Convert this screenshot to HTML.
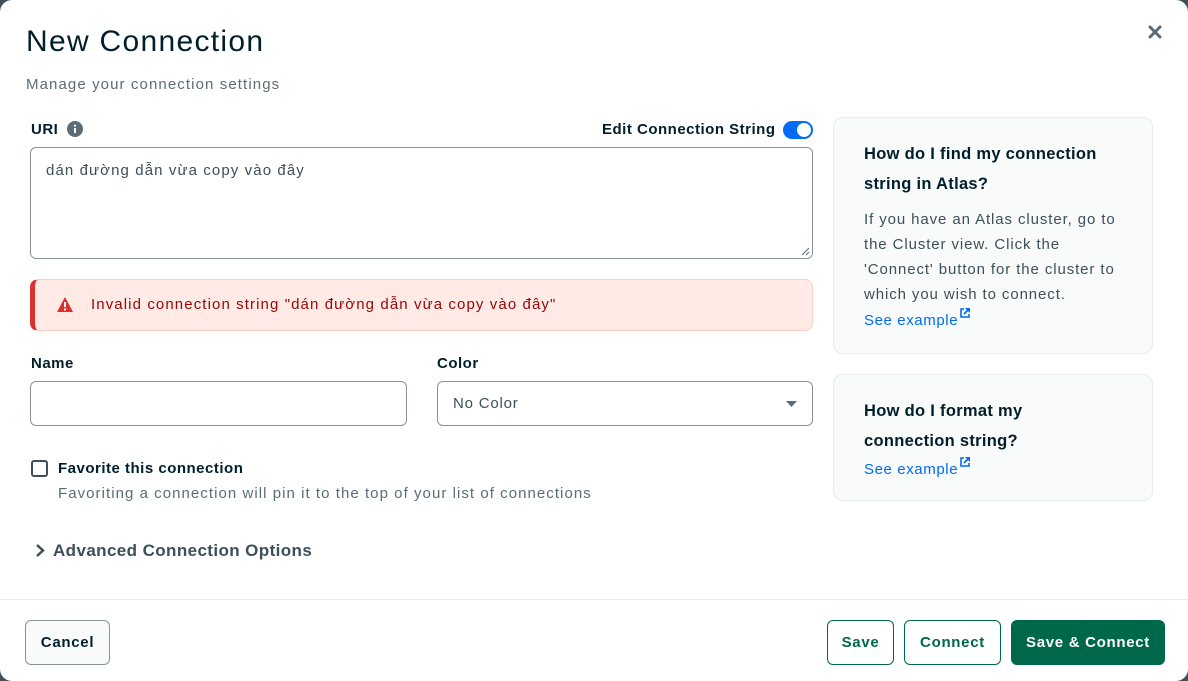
<!DOCTYPE html>
<html><head><meta charset="utf-8"><style>
*{box-sizing:border-box;margin:0;padding:0}
html,body{width:1188px;height:681px;background:#3d4f58;overflow:hidden}
body{font-family:"Liberation Sans",sans-serif;color:#001e2b}
.dlg{position:absolute;left:0;top:0;width:1188px;height:681px;background:#fff;border-radius:12px}
.abs{position:absolute;white-space:nowrap}
h1{position:absolute;left:26px;top:25px;font-size:30px;font-weight:normal;letter-spacing:1.3px}
.sub{left:26px;top:76px;font-size:15px;color:#5c6c75;letter-spacing:1.1px}
.lbl{font-size:15px;font-weight:bold;color:#001e2b;letter-spacing:0.5px}
.ta{left:30px;top:147px;width:783px;height:112px;border:1px solid #889397;border-radius:6px;padding:14px 15px;font-size:15px;color:#3d4f58;letter-spacing:1.1px}
.err{left:30px;top:279px;width:783px;height:52px;background:#ffeae5;border:1px solid #ffcdc7;border-left:5px solid #db3030;border-radius:8px}
.err span{position:absolute;left:56px;top:16px;font-size:15px;color:#970606;letter-spacing:1.1px}
.inp{border:1px solid #889397;border-radius:6px;height:45px}
.card{position:absolute;left:833px;width:320px;background:#f9fbfa;border:1px solid #e8edeb;border-radius:10px;padding:21px 30px;white-space:nowrap}
.card h3{font-size:16.5px;line-height:30px;font-weight:bold;color:#001e2b;letter-spacing:0.3px}
.card p{font-size:15px;line-height:25px;color:#3d4f58;margin-top:8px;letter-spacing:0.9px}
.link{font-size:15px;color:#016bf8;line-height:25px;letter-spacing:0.6px}
.btn{position:absolute;top:620px;height:45px;border-radius:6px;font-size:15px;font-weight:bold;display:flex;align-items:center;justify-content:center;letter-spacing:0.7px}
</style></head><body>
<div class="dlg">
<h1>New Connection</h1>
<div class="abs sub">Manage your connection settings</div>
<svg class="abs" style="left:1148px;top:25px" width="14" height="14" viewBox="0 0 14 14"><path d="M2 2L12 12M12 2L2 12" stroke="#5c6c75" stroke-width="3" stroke-linecap="round"/></svg>

<div class="abs lbl" style="left:31px;top:121px">URI</div>
<svg class="abs" style="left:67px;top:121px" width="16" height="16" viewBox="0 0 16 16"><circle cx="8" cy="8" r="8" fill="#5c6c75"/><rect x="7" y="7" width="2" height="5" fill="#fff"/><circle cx="8" cy="4.6" r="1.1" fill="#fff"/></svg>
<div class="abs lbl" style="left:602px;top:121px">Edit Connection String</div>
<div class="abs" style="left:783px;top:121px;width:30px;height:18px;border-radius:9px;background:#016bf8"><div style="position:absolute;right:2px;top:2px;width:14px;height:14px;border-radius:50%;background:#fff"></div></div>

<div class="abs ta">dán đường dẫn vừa copy vào đây</div>
<svg class="abs" style="left:800px;top:246px" width="10" height="10"><path d="M9 2L2 9M9 6L6 9" stroke="#5c6c75" stroke-width="1"/></svg>

<div class="abs err">
<svg class="abs" style="left:21px;top:16px" width="18" height="17" viewBox="0 0 18 17"><path d="M9 1L17 16H1Z" fill="#db3030"/><rect x="8" y="6" width="2" height="5" fill="#fff"/><rect x="8" y="12.5" width="2" height="2" fill="#fff"/></svg>
<span>Invalid connection string "dán đường dẫn vừa copy vào đây"</span>
</div>

<div class="abs lbl" style="left:31px;top:355px">Name</div>
<div class="abs inp" style="left:30px;top:381px;width:377px"></div>
<div class="abs lbl" style="left:437px;top:355px">Color</div>
<div class="abs inp" style="left:437px;top:381px;width:376px"><span style="position:absolute;left:15px;top:13px;font-size:15px;color:#3d4f58;letter-spacing:0.8px">No Color</span>
<svg class="abs" style="left:348px;top:19px" width="11" height="7"><path d="M0 0H11L5.5 6Z" fill="#5c6c75"/></svg></div>

<div class="abs" style="left:31px;top:460px;width:17px;height:17px;border:2px solid #3d4f58;border-radius:3px"></div>
<div class="abs lbl" style="left:58px;top:460px">Favorite this connection</div>
<div class="abs" style="left:58px;top:485px;font-size:15px;color:#5c6c75;letter-spacing:1.05px">Favoriting a connection will pin it to the top of your list of connections</div>

<svg class="abs" style="left:35px;top:543px" width="10" height="15"><path d="M2 2L8 7.5L2 13" stroke="#3d4f58" stroke-width="2.5" fill="none"/></svg>
<div class="abs" style="left:53px;top:541px;font-size:17px;font-weight:bold;color:#3d4f58;letter-spacing:0.4px">Advanced Connection Options</div>

<div class="card" style="top:117px;height:237px">
<h3>How do I find my connection<br>string in Atlas?</h3>
<p>If you have an Atlas cluster, go to<br>the Cluster view. Click the<br>'Connect' button for the cluster to<br>which you wish to connect.</p>
<div class="link">See example<svg width="12" height="12" viewBox="0 0 12 12" style="vertical-align:6px;margin-left:1px"><path d="M5 2H2V10H10V7" stroke="#016bf8" stroke-width="1.6" fill="none"/><path d="M6 1H11V6Z" fill="#016bf8"/><path d="M10 2L5 7" stroke="#016bf8" stroke-width="1.8"/></svg></div>
</div>
<div class="card" style="top:374px;height:127px">
<h3>How do I format my<br>connection string?</h3>
<div class="link">See example<svg width="12" height="12" viewBox="0 0 12 12" style="vertical-align:6px;margin-left:1px"><path d="M5 2H2V10H10V7" stroke="#016bf8" stroke-width="1.6" fill="none"/><path d="M6 1H11V6Z" fill="#016bf8"/><path d="M10 2L5 7" stroke="#016bf8" stroke-width="1.8"/></svg></div>
</div>

<div class="abs" style="left:0;top:599px;width:1188px;height:1px;background:#e8edeb"></div>
<div class="btn" style="left:25px;width:85px;background:#f9fbfa;border:1px solid #889397;color:#001e2b">Cancel</div>
<div class="btn" style="left:827px;width:67px;border:1px solid #00684a;color:#00684a">Save</div>
<div class="btn" style="left:904px;width:97px;border:1px solid #00684a;color:#00684a">Connect</div>
<div class="btn" style="left:1011px;width:154px;background:#00684a;color:#fff">Save &amp; Connect</div>
</div>
</body></html>
